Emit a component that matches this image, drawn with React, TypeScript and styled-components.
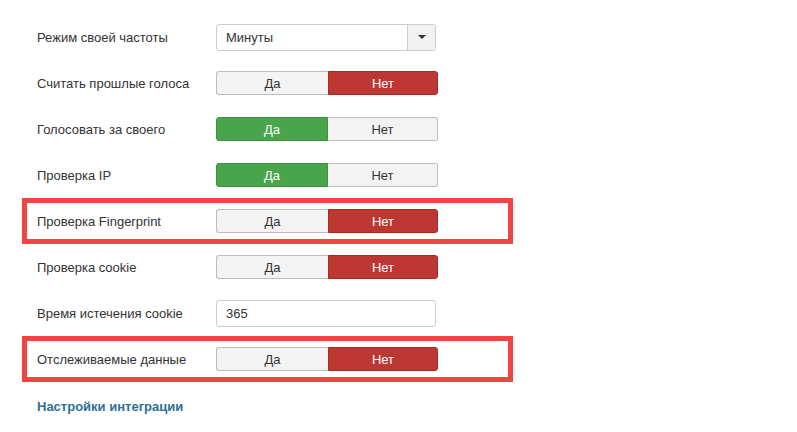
import React from "react";
import styled, { createGlobalStyle } from "styled-components";

const Global = createGlobalStyle`
  html, body { margin: 0; padding: 0; background: #fff; }
  body { font-family: "Liberation Sans", Arial, Helvetica, sans-serif; font-size: 13px; color: #333; }
`;

const Form = styled.div`
  padding: 14px 0 0 22px;
  display: flex;
  flex-direction: column;
`;

const Row = styled.div<{ $hl?: boolean }>`
  width: 491px;
  height: 46px;
  box-sizing: border-box;
  padding-left: 15px;
  display: flex;
  align-items: center;
  ${(p) => (p.$hl ? "box-shadow: inset 0 0 0 5px #f24444;" : "")}
`;

const Label = styled.div`
  width: 179px;
  flex: none;
  font-size: 13px;
  color: #333;
`;

const Select = styled.div`
  width: 220px;
  height: 27px;
  box-sizing: border-box;
  border: 1px solid #ccc;
  border-radius: 3px;
  display: flex;
  background: #fff;
  overflow: hidden;
`;

const SelectText = styled.div`
  flex: 1;
  padding-left: 9px;
  display: flex;
  align-items: center;
  font-size: 13px;
  color: #333;
`;

const SelectArrow = styled.div`
  width: 27px;
  border-left: 1px solid #ccc;
  background: #f2f2f2;
  display: flex;
  align-items: center;
  justify-content: center;
`;

const Caret = styled.span`
  width: 0;
  height: 0;
  border-left: 4px solid transparent;
  border-right: 4px solid transparent;
  border-top: 4px solid #333;
`;

const Input = styled.div`
  width: 220px;
  height: 27px;
  box-sizing: border-box;
  border: 1px solid #ccc;
  border-radius: 3px;
  padding-left: 9px;
  display: flex;
  align-items: center;
  font-size: 13px;
  color: #333;
`;

const Toggle = styled.div`
  width: 222px;
  height: 24px;
  display: flex;
`;

const Btn = styled.div<{ $on?: "red" | "green"; $side: "l" | "r" }>`
  flex: none;
  width: ${(p) => (p.$side === "l" ? "112px" : "110px")};
  box-sizing: border-box;
  display: flex;
  align-items: center;
  justify-content: center;
  font-size: 13px;
  border: 1px solid ${(p) => (p.$on === "red" ? "#a52a24" : p.$on === "green" ? "#3d9140" : "#bdbdbd")};
  ${(p) => (p.$side === "l" ? "border-radius: 3px 0 0 3px;" : "border-radius: 0 3px 3px 0;")}
  ${(p) => (p.$side === "r" && !p.$on ? "border-left: none;" : "")}
  ${(p) => (p.$side === "l" && !p.$on ? "border-right: none;" : "")}
  background: ${(p) => (p.$on === "red" ? "#bd3833" : p.$on === "green" ? "#48a54b" : "#f3f3f3")};
  color: ${(p) => (p.$on ? "#fff" : "#333")};
`;

const Heading = styled.div`
  margin: 17px 0 0 15px;
  font-weight: bold;
  font-size: 13px;
  color: #2f6f94;
`;

type T = "yes" | "no";

function YesNo({ v }: { v: T }) {
  return (
    <Toggle>
      <Btn $side="l" $on={v === "yes" ? "green" : undefined}>Да</Btn>
      <Btn $side="r" $on={v === "no" ? "red" : undefined}>Нет</Btn>
    </Toggle>
  );
}

const toggles: { label: string; v: T; hl?: boolean }[] = [
  { label: "Считать прошлые голоса", v: "no" },
  { label: "Голосовать за своего", v: "yes" },
  { label: "Проверка IP", v: "yes" },
  { label: "Проверка Fingerprint", v: "no", hl: true },
  { label: "Проверка cookie", v: "no" },
];

export default function App() {
  return (
    <>
      <Global />
      <Form>
        <Row>
          <Label>Режим своей частоты</Label>
          <Select>
            <SelectText>Минуты</SelectText>
            <SelectArrow>
              <Caret />
            </SelectArrow>
          </Select>
        </Row>
        {toggles.map((t) => (
          <Row key={t.label} $hl={t.hl}>
            <Label>{t.label}</Label>
            <YesNo v={t.v} />
          </Row>
        ))}
        <Row>
          <Label>Время истечения cookie</Label>
          <Input>365</Input>
        </Row>
        <Row $hl>
          <Label>Отслеживаемые данные</Label>
          <YesNo v="no" />
        </Row>
        <Heading>Настройки интеграции</Heading>
      </Form>
    </>
  );
}
